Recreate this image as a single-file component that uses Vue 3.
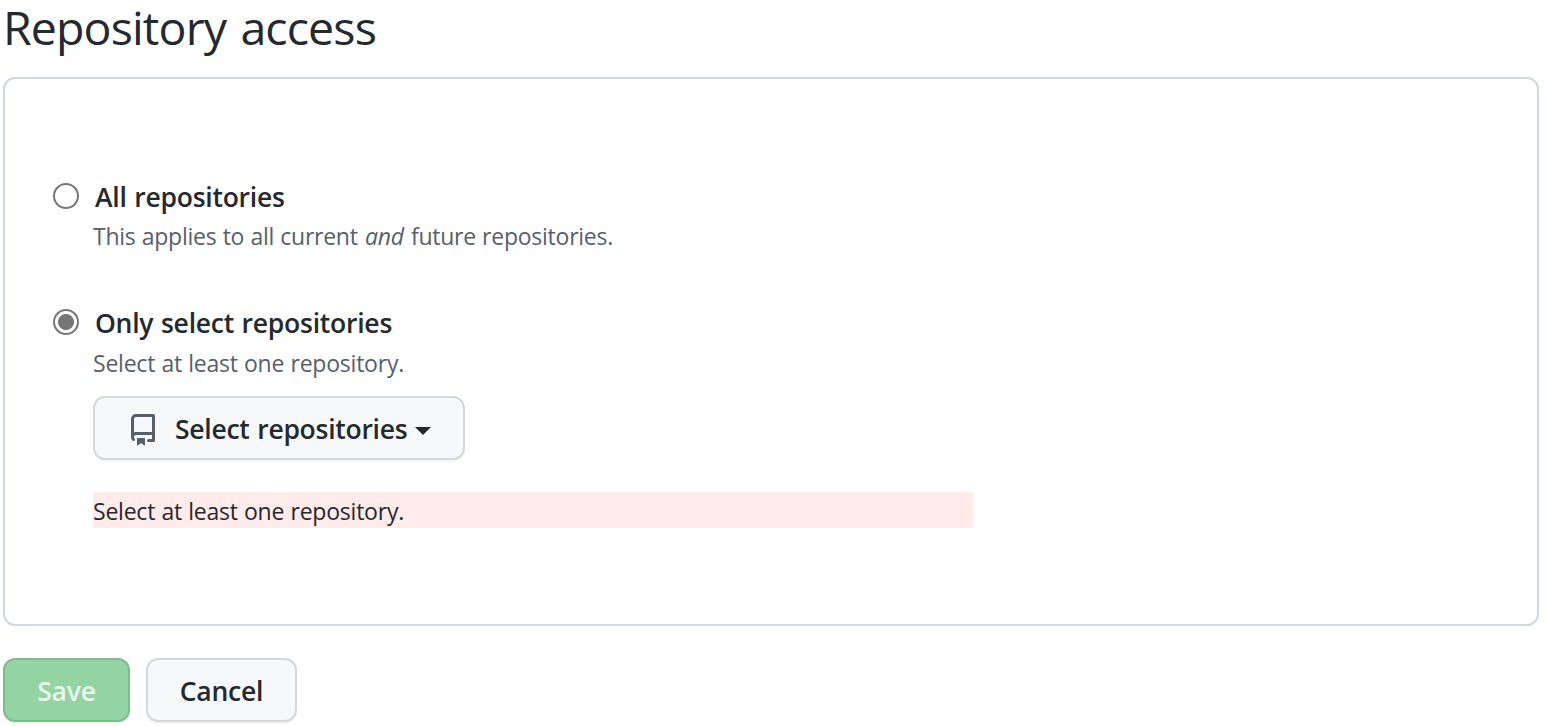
<script setup>
import { ref } from 'vue'

const access = ref('selected')
</script>

<template>
  <main class="page">
    <h2 class="title">Repository access</h2>
    <section class="box">
      <label class="option">
        <input v-model="access" class="radio" type="radio" value="all" />
        <span class="name">All repositories</span>
      </label>
      <p class="note applies">This applies to all current <em>and</em> future repositories.</p>

      <label class="option second">
        <input v-model="access" class="radio" type="radio" value="selected" />
        <span class="name">Only select repositories</span>
      </label>
      <p class="note">Select at least one repository.</p>

      <button class="btn picker" type="button">
        <svg class="repo" viewBox="0 0 16 16" width="32" height="32" aria-hidden="true">
          <path fill-rule="evenodd" d="M2 2.5A2.5 2.5 0 014.5 0h8.75a.75.75 0 01.75.75v12.5a.75.75 0 01-.75.75h-2.5a.75.75 0 110-1.5h1.75v-2h-8a1 1 0 00-.714 1.7.75.75 0 01-1.072 1.05A2.495 2.495 0 012 11.5v-9zm10.5-1V9h-8c-.356 0-.694.074-1 .208V2.5a1 1 0 011-1h8zM5 12.25v3.25a.25.25 0 00.4.2l1.45-1.087a.25.25 0 01.3 0L8.6 15.7a.25.25 0 00.4-.2v-3.25a.25.25 0 00-.25-.25h-3.5a.25.25 0 00-.25.25z" />
        </svg>
        <span class="picker-text">Select repositories</span>
        <span class="caret"></span>
      </button>

      <p class="error">Select at least one repository.</p>
    </section>
    <div class="actions">
      <button class="btn save" type="button" disabled><span>Save</span></button>
      <button class="btn cancel" type="button"><span>Cancel</span></button>
    </div>
  </main>
</template>

<style>
body {
  background: #fff;
}
</style>

<style scoped>
.page {
  box-sizing: border-box;
  height: 726px;
  padding: 0 9px 0 3px;
  font-family: "Open Sans", "Noto Sans", sans-serif;
  color: #24292f;
  white-space: nowrap;
}
.title {
  margin: 0;
  height: 77px;
  line-height: 54px;
  font-size: 46.5px;
  font-weight: 400;
  letter-spacing: -0.88px;
  word-spacing: 3px;
}
.box {
  box-sizing: border-box;
  height: 549px;
  padding: 100px 48px 0;
  border: 2px solid #d0d7e2;
  border-radius: 12px;
}
.option {
  display: flex;
  align-items: center;
  height: 36px;
}
.second {
  margin-top: 51px;
}
.radio {
  appearance: none;
  box-sizing: border-box;
  flex: none;
  width: 26px;
  height: 26px;
  margin: -3px 16px 0 0;
  border: 2px solid #767676;
  border-radius: 50%;
  background: #fff;
}
.radio:checked {
  background: radial-gradient(circle, #767676 0 7.6px, #fff 8.3px);
}
.name {
  font-size: 26.5px;
  font-weight: 600;
  line-height: 36px;
  letter-spacing: -0.24px;
  word-spacing: 1px;
}
.note {
  margin: 4px 0 0 40px;
  height: 36px;
  line-height: 36px;
  font-size: 23px;
  letter-spacing: -0.22px;
  word-spacing: 0.5px;
  color: #57606a;
}
.applies {
  margin-top: 3px;
  letter-spacing: -0.25px;
}
.applies em {
  margin: 0 1px;
}
.btn {
  box-sizing: border-box;
  display: flex;
  align-items: center;
  height: 64px;
  padding: 0;
  border: 2px solid #d5d8db;
  border-radius: 12px;
  background: #f6f8fa;
  box-shadow: 0 2px 0 rgba(27, 31, 36, 0.04);
  font: 600 26.5px/40px "Open Sans", "Noto Sans", sans-serif;
  letter-spacing: -0.2px;
  color: #24292f;
}
.picker {
  width: 372px;
  margin: 15px 0 0 40px;
  padding: 2px 0 0 32px;
}
.repo {
  flex: none;
  margin-top: 2px;
  fill: #57606a;
}
.picker-text {
  width: 233px;
  margin-left: 16px;
  text-align: left;
  letter-spacing: -0.26px;
  word-spacing: 1px;
}
.caret {
  margin: 3px 0 0 7px;
  border: 8px solid transparent;
  border-top-color: #24292f;
  border-bottom: 0;
}
.error {
  width: 880px;
  height: 36px;
  margin: 32px 0 0 40px;
  background: #ffebe9;
  line-height: 38px;
  font-size: 23px;
  letter-spacing: -0.22px;
  word-spacing: 0.5px;
}
.actions {
  display: flex;
  gap: 16px;
  margin-top: 32px;
}
.save {
  justify-content: center;
  width: 127px;
  padding-top: 2px;
  border-color: #80bb8e;
  background: #94d3a2;
  color: #e9f6ec;
}
.cancel {
  justify-content: center;
  width: 151px;
  padding-top: 2px;
}
</style>
